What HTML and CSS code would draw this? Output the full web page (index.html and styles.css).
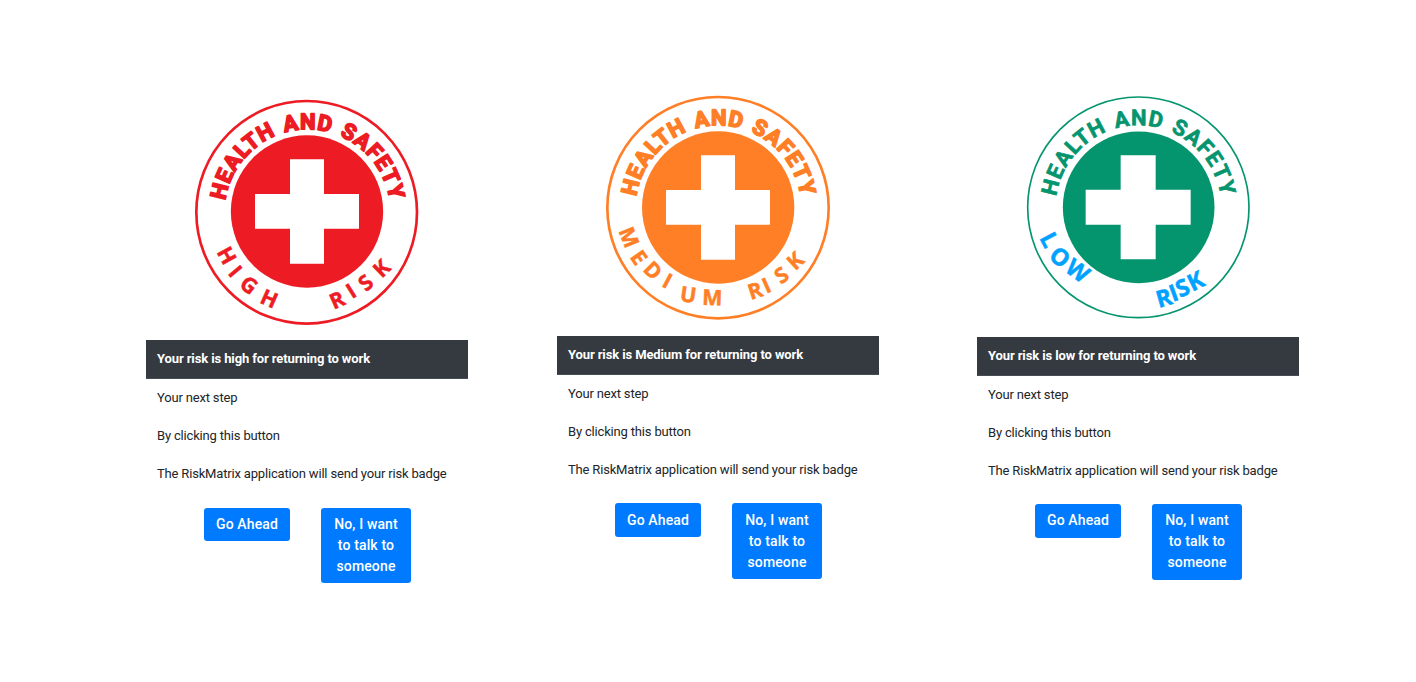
FILE: index.html
```html
<!DOCTYPE html>
<html lang="en">
<head>
<meta charset="utf-8">
<title>Risk badges</title>
<link rel="stylesheet" href="styles.css">
</head>
<body>
<main class="board">
  <section class="card high">
    <svg class="badge" viewBox="0 0 720 720">
      <path id="arc-high" class="guide" d="M118 332 A249 249 0 0 1 611 332"/>
      <ellipse class="ring" cx="362" cy="367" rx="331" ry="334"/>
      <circle class="disc" cx="363" cy="364.500" r="228.500"/>
      <path class="cross" d="M312 208h102v104h105v104H414v105H312V416H207V312h105z"/>
      <text class="motto"><textPath href="#arc-high" textLength="709">HEALTH AND SAFETY</textPath></text>
      <text class="level" x="91 124 157 218.500" y="486 550.500 589 637" rotate="61 50 38 24">HIGH</text>
      <text class="level" x="443 498 540 587" y="659 628 607 566" rotate="-24 -32 -40 -44">RISK</text>
    </svg>
    <h2 class="title">Your risk is high for returning to work</h2>
    <p class="row">Your next step</p>
    <p class="row">By clicking this button</p>
    <p class="row">The RiskMatrix application will send your risk badge</p>
    <div class="actions"><button class="btn go">Go Ahead</button><button class="btn talk">No, I want to talk to someone</button></div>
  </section>

  <section class="card medium">
    <svg class="badge" viewBox="0 0 720 720">
      <path id="arc-medium" class="guide" d="M115 326 A249 249 0 0 1 608 326"/>
      <ellipse class="ring" cx="360" cy="359" rx="332" ry="332"/>
      <circle class="disc" cx="360.500" cy="358.500" r="228.500"/>
      <path class="cross" d="M309 202h102v104h105v104H411v105H309V410H204V306h105z"/>
      <text class="motto"><textPath href="#arc-medium" textLength="709">HEALTH AND SAFETY</textPath></text>
      <text class="level" x="61 94 132 188 244 312" y="428 507 547 593 639 650" rotate="68 55 45 28 8 2">MEDIUM</text>
      <text class="level" x="458 505 549 592" y="636 617 590 550" rotate="-18 -24 -35 -43">RISK</text>
    </svg>
    <h2 class="title">Your risk is Medium for returning to work</h2>
    <p class="row">Your next step</p>
    <p class="row">By clicking this button</p>
    <p class="row">The RiskMatrix application will send your risk badge</p>
    <div class="actions"><button class="btn go">Go Ahead</button><button class="btn talk">No, I want to talk to someone</button></div>
  </section>

  <section class="card low">
    <svg class="badge" viewBox="0 0 720 720">
      <path id="arc-low" class="guide" d="M115 326 A249 249 0 0 1 608 326"/>
      <ellipse class="ring" cx="361" cy="358" rx="332" ry="331"/>
      <circle class="disc" cx="362" cy="358" r="227.500"/>
      <path class="cross" d="M308 202h105v103h105v105H413v104H308V410H203V305h105z"/>
      <text class="motto"><textPath href="#arc-low" textLength="709">HEALTH AND SAFETY</textPath></text>
      <text class="level" x="63 88.600 137" y="449.400 508.700 548" rotate="62 40 36">LOW</text>
      <text class="level" x="422.300 464 486 523" y="660 642 630 611" rotate="-16 -20 -24 -26">RISK</text>
    </svg>
    <h2 class="title">Your risk is low for returning to work</h2>
    <p class="row">Your next step</p>
    <p class="row">By clicking this button</p>
    <p class="row">The RiskMatrix application will send your risk badge</p>
    <div class="actions"><button class="btn go">Go Ahead</button><button class="btn talk">No, I want to talk to someone</button></div>
  </section>
</main>
</body>
</html>
```
FILE: styles.css
```css
* { box-sizing: border-box; }
body {
  margin: 0;
  background: #fff;
  color: #212529;
  font-family: Roboto, "Liberation Sans", sans-serif;
  font-size: 13px;
}
.board {
  display: grid;
  grid-template-columns: 322px 322px 322px;
  column-gap: 89px;
  height: 682px;
  padding: 88px 0 0 146px;
  overflow: hidden;
}
.card { display: flex; flex-direction: column; }
.high { --tone: #ed1c24; --ring: 8; --bold: 5; padding-top: 2px; }
.medium { --tone: #ff7f27; --ring: 8; --bold: 5; }
.low { --tone: #05956e; --ring: 5; --bold: 2; margin-left: 9px; margin-right: -9px; }
.badge { display: block; width: 240px; height: 240px; margin: 0 0 10px 40px; }
.medium .badge { margin: 0 0 8px 41px; }
.low .badge { margin: 0 0 9px 41px; }
.guide { fill: none; }
.ring { fill: #fff; stroke: var(--tone); stroke-width: var(--ring); }
.disc { fill: var(--tone); }
.cross { fill: #fff; }
.motto {
  fill: var(--tone);
  stroke: var(--tone);
  stroke-width: var(--bold);
  stroke-linejoin: round;
  font: 700 66px Roboto, sans-serif;
  word-spacing: 6px;
}
.level {
  fill: var(--tone);
  stroke: var(--tone);
  stroke-width: 1.5;
  font: 700 64px "Open Sans", sans-serif;
}
.low .level { fill: #00a2ff; stroke: #00a2ff; font-size: 70px; }
.title {
  height: 39px;
  margin: 0;
  padding: 0 11px;
  background: #343a40;
  border-bottom: 1px solid #454d55;
  color: #fff;
  font-size: 13px;
  font-weight: 700;
  letter-spacing: -0.115px;
  line-height: 37px;
}
.row { height: 38px; margin: 0; padding: 0 11px; letter-spacing: -0.175px; line-height: 37px; }
.actions {
  display: flex;
  align-items: flex-start;
  gap: 31px;
  padding: 15px 0 0 58px;
}
.medium .actions, .low .actions { padding-top: 14px; }
.btn {
  margin: 0;
  padding: 6px;
  border: 0;
  border-radius: 3px;
  background: #007bff;
  color: #fff;
  font: 500 14px/21px Roboto, sans-serif;
  letter-spacing: 0.14px;
}
.go { width: 86px; height: 33px; }
.medium .go, .low .go { height: 34px; }
.talk { width: 90px; height: 75px; }
.medium .talk, .low .talk { height: 76px; }
.low .btn { padding-top: 5px; padding-bottom: 7px; }
```
